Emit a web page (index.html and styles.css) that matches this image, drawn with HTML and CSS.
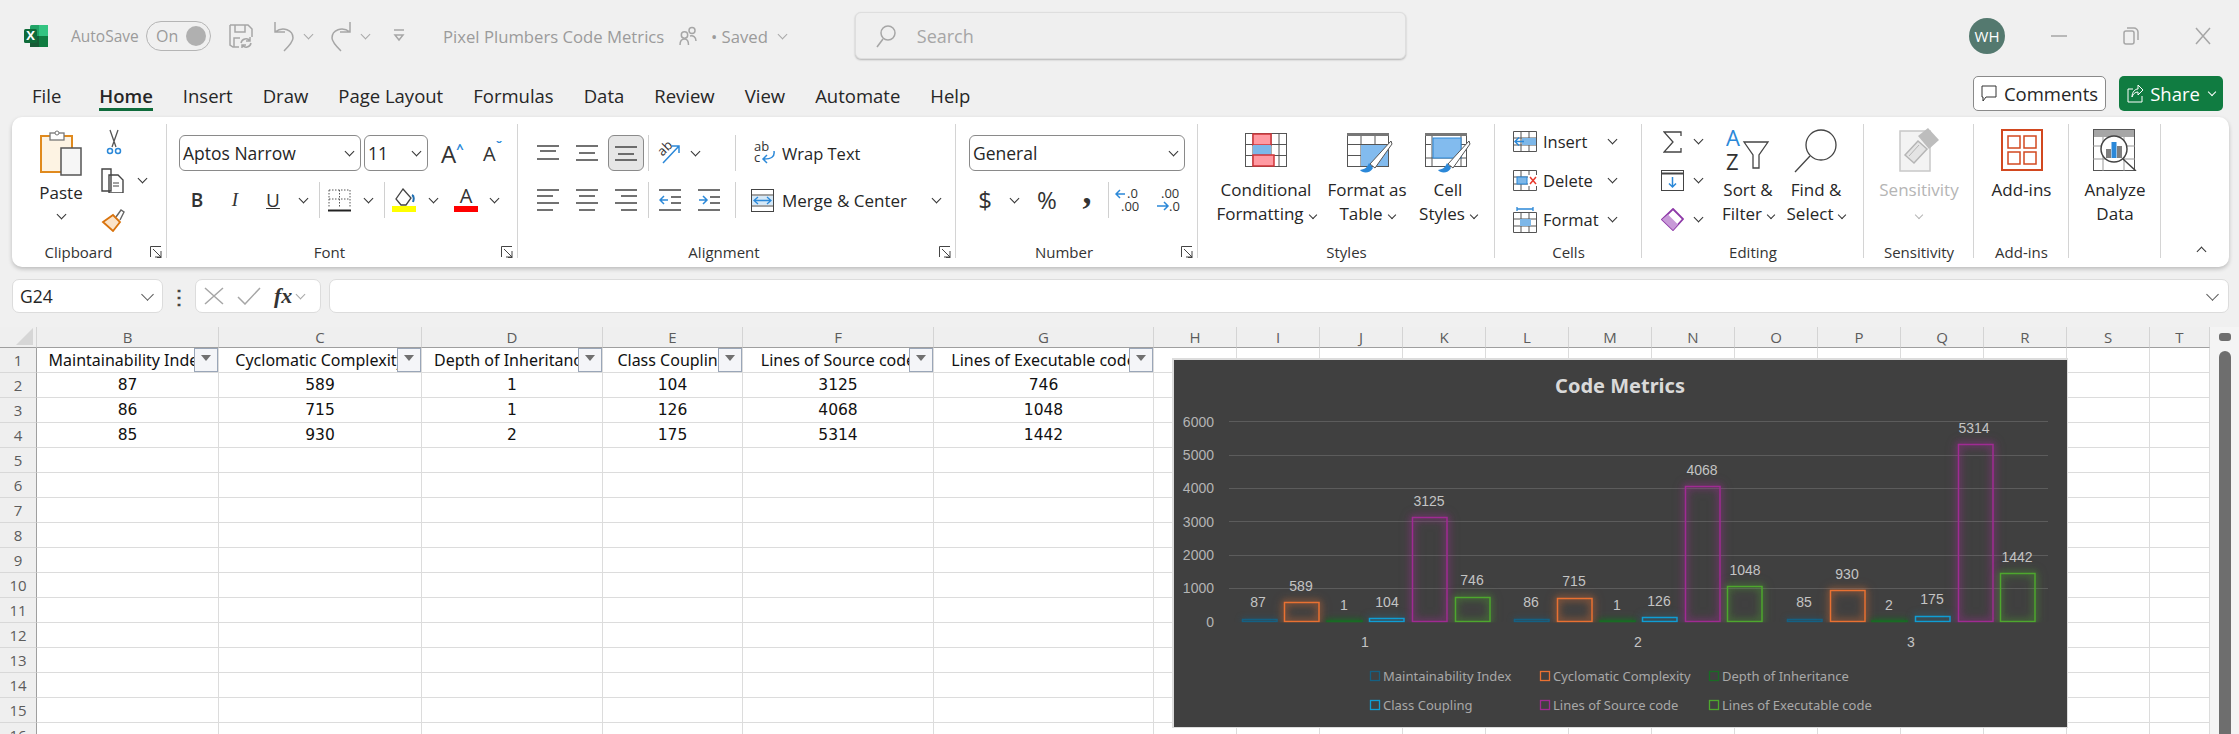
FILE: index.html
```html
<!DOCTYPE html>
<html lang="en">
<head>
    <meta charset="UTF-8">
    <title>Pixel Plumbers Code Metrics</title>
    <link rel="stylesheet" href="styles.css">
</head>
<body>
<header class="titlebar">
    <div class="title-left">
        <svg class="logo" width="24" height="24" viewBox="0 0 24 24"><rect x="6" y="1" width="18" height="22" rx="1.5" fill="#21a366"/><rect x="15" y="1" width="9" height="11" fill="#33c481"/><rect x="15" y="12" width="9" height="11" fill="#107c41"/><rect x="6" y="12" width="9" height="11" fill="#185c37"/><rect x="0" y="5" width="13" height="14" rx="1.5" fill="#0f6b3a"/><text x="6.5" y="16" class="logo-x">X</text></svg>
        <span class="autosave">AutoSave</span>
        <span class="toggle"><span>On</span><i></i></span>
        <svg class="t-save dim" width="24" height="24" viewBox="0 0 24 24"><path d="M1 1h18l4 4v8M1 1v20l3 2h6M6 1v7h10V1M5 23v-9h6"/><path d="M12 19a5 5 0 0 1 9-2M22 19a5 5 0 0 1-9 2M21 13v4h-4M13 25v-4h4"/></svg>
        <svg class="t-undo dim" width="22" height="32" viewBox="0 0 22 32"><path d="M2 2v10h10M2 12c8-6 18-2 18 6 0 4-4 8-9 13"/></svg>
        <span class="chev dim-chev t-c1"></span>
        <svg class="t-redo dim" width="22" height="32" viewBox="0 0 22 32"><path d="M20 2v10H10M20 12c-8-6-18-2-18 6 0 4 4 8 9 13"/></svg>
        <span class="chev dim-chev t-c2"></span>
        <svg class="t-qat dim" width="12" height="14" viewBox="0 0 12 14"><path d="M1 1h10M2 6l4 5 4-5z"/></svg>
        <span class="doc-name">Pixel Plumbers Code Metrics</span>
        <svg class="t-person dim" width="18" height="20" viewBox="0 0 18 20"><circle cx="5.500" cy="9" r="3.200"/><path d="M1 19c0-4 2-6 4.500-6s4 2 4 6"/><circle cx="13" cy="4.500" r="3"/><path d="M11 10c3-1 6 1 6 5"/></svg>
        <span class="saved">• Saved</span>
        <span class="chev dim-chev t-c3"></span>
    </div>
    <div class="search">
        <svg class="dim" width="20" height="24" viewBox="0 0 20 24"><circle cx="12" cy="9" r="7"/><path d="M7 15L1 23"/></svg>
        <span>Search</span>
    </div>
    <div class="title-right">
        <span class="avatar">WH</span>
        <span class="win"><svg class="dim" width="16" height="2" viewBox="0 0 16 2"><path d="M0 1h16"/></svg></span>
        <span class="win"><svg class="dim" width="16" height="18" viewBox="0 0 16 18"><rect x="1" y="4" width="10" height="13" rx="2"/><path d="M4 1h7c2 0 4 2 4 4v8"/></svg></span>
        <span class="win"><svg class="dim" width="16" height="18" viewBox="0 0 16 18"><path d="M1 1l14 16M15 1L1 17"/></svg></span>
    </div>
</header>

<nav class="tabs">
    <a>File</a>
    <a class="on">Home</a>
    <a>Insert</a>
    <a>Draw</a>
    <a>Page Layout</a>
    <a>Formulas</a>
    <a>Data</a>
    <a>Review</a>
    <a>View</a>
    <a>Automate</a>
    <a>Help</a>
    <div class="tab-btns">
        <button class="btn-comments"><svg width="16" height="18" viewBox="0 0 16 18"><path d="M1 1h14v11H5l-3 4v-4H1z"/></svg>Comments</button>
        <button class="btn-share"><svg width="17" height="19" viewBox="0 0 17 19"><path d="M6 5H1v13h14v-6M5 13c0-5 3-8 6-8V1l5 5-5 5V8c-3 0-5 2-6 5z"/></svg>Share<span class="chev"></span></button>
    </div>
</nav>

<section class="ribbon">
    <div class="group g-clip">
        <div class="clip-body">
            <div class="paste">
                <svg width="42" height="46" viewBox="0 0 42 46"><rect x="1" y="6" width="31" height="36" fill="#fdf3e3" stroke="#e08a1e" stroke-width="2"/><rect x="10" y="3" width="14" height="7" fill="#fff" stroke="#777" stroke-width="1.300"/><circle cx="17" cy="3" r="2" fill="#fff" stroke="#777"/><rect x="21" y="18" width="20" height="27" fill="#f6f6f6" stroke="#555" stroke-width="1.500"/></svg>
                <span>Paste</span>
                <span class="chev"></span>
            </div>
            <div class="stack clip-tools">
                <div><svg width="16" height="26" viewBox="0 0 16 26"><path d="M4 1l6 17M12 1L6 18" fill="none" stroke="#555" stroke-width="1.300"/><circle cx="4" cy="22" r="2.500" fill="none" stroke="#2b88d8" stroke-width="1.500"/><circle cx="12" cy="22" r="2.500" fill="none" stroke="#2b88d8" stroke-width="1.500"/></svg></div>
                <div><svg width="25" height="25" viewBox="0 0 25 25"><path d="M1 1h9v22H1zM8 7h9l5 5v13H8z" fill="#fff" stroke="#444" stroke-width="1.400"/><path d="M12 15h6M12 18h6" stroke="#444"/></svg><span class="chev"></span></div>
                <div><svg width="25" height="24" viewBox="0 0 25 24"><path d="M15 9l5-7 3 2-4 8" fill="#fff" stroke="#666" stroke-width="1.400"/><path d="M2 14l10-7 7 7-7 9z" fill="#fbe3c8" stroke="#d9730d" stroke-width="1.800"/></svg></div>
            </div>
        </div>
        <div class="group-label">Clipboard</div>
        <svg class="launcher" width="12" height="12" viewBox="0 0 12 12"><path d="M0.500 11V.500H11M3 3l8 8M11 5v6H5M7 11.500h4.500"/></svg>
    </div>

    <div class="group g-font">
        <div class="rows">
            <div class="font-top">
                <div class="select sel-font">Aptos Narrow<span class="chev"></span></div>
                <div class="select sel-size">11<span class="chev"></span></div>
                <span class="big-a">A<sup class="blue">^</sup></span>
                <span class="small-a">A<sup class="blue">ˇ</sup></span>
            </div>
            <div class="row-tools font-tools">
                <b class="glyph">B</b>
                <i class="glyph serif">I</i>
                <u class="glyph">U</u>
                <span class="chev"></span>
                <span class="sep"></span>
                <svg width="23" height="23" viewBox="0 0 23 23"><path d="M1 1h21M1 1v18M22 1v18M11.500 1v18M1 10h21" fill="none" stroke="#555" stroke-dasharray="1.500 1.500"/><path d="M0 21.500h23" stroke="#222" stroke-width="2"/></svg>
                <span class="chev"></span>
                <span class="sep"></span>
                <svg width="24" height="24" viewBox="0 0 24 24"><path d="M11 1l8 9-5 7H9L4 11z" fill="#fff" stroke="#444" stroke-width="1.300"/><path d="M20 7c2 1 2 4 1 7" fill="none" stroke="#1f6fb2" stroke-width="2"/><rect y="18" width="24" height="6" fill="#ffff00"/></svg>
                <span class="chev"></span>
                <svg width="24" height="24" viewBox="0 0 24 24"><text x="12" y="15" class="ink-a">A</text><rect y="18" width="24" height="6" fill="#ff0000"/></svg>
                <span class="chev"></span>
            </div>
        </div>
        <div class="group-label">Font</div>
        <svg class="launcher" width="12" height="12" viewBox="0 0 12 12"><path d="M0.500 11V.500H11M3 3l8 8M11 5v6H5M7 11.500h4.500"/></svg>
    </div>

    <div class="group g-align">
        <div class="rows">
            <div class="row-tools align-top">
                <svg class="lines" width="22" height="16" viewBox="0 0 22 16"><path d="M0 1h22M3 6h16M0 14h22"/></svg>
                <svg class="lines" width="22" height="16" viewBox="0 0 22 16"><path d="M0 1h22M3 8h16M0 15h22"/></svg>
                <span class="pressed"><svg class="lines" width="22" height="16" viewBox="0 0 22 16"><path d="M0 2h22M3 9h16M0 15h22"/></svg></span>
                <span class="sep"></span>
                <svg width="23" height="24" viewBox="0 0 23 24"><text x="2" y="13" class="ab" transform="rotate(-45 7 10)">ab</text><path d="M6 22L22 5M15 5h7v7" fill="none" stroke="#2b88d8" stroke-width="1.500"/></svg>
                <span class="chev"></span>
                <span class="sep sep-end"></span>
                <div class="icon-label wrap-text">
                    <svg width="22" height="24" viewBox="0 0 22 24"><text x="0" y="10" class="tiny">ab</text><text x="0" y="21" class="tiny">c</text><path d="M20 10c1 6-3 8-10 8M13 14l-4 4 4 4" fill="none" stroke="#2b88d8" stroke-width="1.500"/></svg>
                    <span>Wrap Text</span>
                </div>
            </div>
            <div class="row-tools align-bottom">
                <svg class="lines" width="22" height="22" viewBox="0 0 22 22"><path d="M0 1h22M0 7h16M0 14h22M0 21h16"/></svg>
                <svg class="lines" width="22" height="22" viewBox="0 0 22 22"><path d="M0 1h22M3 7h16M0 14h22M3 21h16"/></svg>
                <svg class="lines" width="22" height="22" viewBox="0 0 22 22"><path d="M0 1h22M6 7h16M0 14h22M6 21h16"/></svg>
                <span class="sep"></span>
                <svg width="22" height="22" viewBox="0 0 22 22"><path class="ln" d="M0 1h22M12 8h10M12 14h10M0 21h22"/><path class="bl" d="M9 11H1M5 7l-4 4 4 4"/></svg>
                <svg width="22" height="22" viewBox="0 0 22 22"><path class="ln" d="M0 1h22M12 8h10M12 14h10M0 21h22"/><path class="bl" d="M1 11h8M5 7l4 4-4 4"/></svg>
                <span class="sep sep-end"></span>
                <div class="icon-label merge">
                    <svg width="23" height="23" viewBox="0 0 23 23"><rect x=".5" y=".5" width="22" height="22" fill="#fff" stroke="#444"/><path d="M0 6h23M0 17h23" stroke="#444"/><rect x="1" y="7" width="21" height="9" fill="#d5e8f7"/><path d="M3 11.500h17M7 8l-4 3.500L7 15M16 8l4 3.500L16 15" fill="none" stroke="#2b88d8" stroke-width="1.300"/></svg>
                    <span>Merge &amp; Center</span>
                    <span class="chev"></span>
                </div>
            </div>
        </div>
        <div class="group-label">Alignment</div>
        <svg class="launcher" width="12" height="12" viewBox="0 0 12 12"><path d="M0.500 11V.500H11M3 3l8 8M11 5v6H5M7 11.500h4.500"/></svg>
    </div>

    <div class="group g-num">
        <div class="rows">
            <div class="num-top"><div class="select sel-num">General<span class="chev"></span></div></div>
            <div class="row-tools num-tools">
                <span class="glyph lg">$</span>
                <span class="chev"></span>
                <span class="glyph lg">%</span>
                <span class="glyph lg heavy">,</span>
                <span class="sep"></span>
                <svg width="24" height="26" viewBox="0 0 24 26"><text x="12" y="11" class="tiny">.0</text><text x="6" y="24" class="tiny">.00</text><path class="bl" d="M10 7H1M5 3L1 7l4 4"/></svg>
                <svg width="24" height="26" viewBox="0 0 24 26"><text x="5" y="11" class="tiny">.00</text><text x="13" y="24" class="tiny">.0</text><path class="bl" d="M1 19h11M8 15l4 4-4 4"/></svg>
            </div>
        </div>
        <div class="group-label">Number</div>
        <svg class="launcher" width="12" height="12" viewBox="0 0 12 12"><path d="M0.500 11V.500H11M3 3l8 8M11 5v6H5M7 11.500h4.500"/></svg>
    </div>

    <div class="group g-styles">
        <div class="bigs">
            <div class="big big-cond">
                <div class="big-icon"><svg width="42" height="34" viewBox="0 0 42 34"><rect x=".5" y=".5" width="41" height="33" fill="#fff" stroke="#555"/><path d="M0 11.500h42M0 22.500h42M8 0v34M26 0v34M34 0v34" stroke="#555"/><rect x="8" y="1" width="18" height="11" fill="#ff9aa2" stroke="#d13438" stroke-width="1.500"/><rect x="8" y="12" width="18" height="10" fill="#7db7e8"/><rect x="8" y="22" width="21" height="11" fill="#ff9aa2" stroke="#d13438" stroke-width="1.500"/></svg></div>
                <span>Conditional</span>
                <span>Formatting<i class="chev"></i></span>
            </div>
            <div class="big big-table">
                <div class="big-icon"><svg width="46" height="42" viewBox="0 0 46 42"><rect x=".5" y=".5" width="41" height="33" fill="#fff" stroke="#555"/><path d="M0 11.500h42M14 0v34M28 0v34M0 22.500h42" stroke="#555"/><path d="M0 0h42v3H0z" fill="#777"/><rect x="14" y="12" width="27" height="21" fill="#82bbee"/><path d="M44 8L23 31l5 4L45 11z" fill="#fff" stroke="#555"/><path d="M22 30c-2 4-3 6-9 7 2 3 10 4 13-2z" fill="#2b88d8"/></svg></div>
                <span>Format as</span>
                <span>Table<i class="chev"></i></span>
            </div>
            <div class="big big-cell">
                <div class="big-icon"><svg width="46" height="42" viewBox="0 0 46 42"><rect x=".5" y=".5" width="41" height="33" fill="#fff" stroke="#555"/><path d="M0 11.500h6M36 11.500h6M7 0v34M36 0v34M0 25h42" stroke="#555"/><path d="M0 0h42v3H0z" fill="#777"/><rect x="8" y="5" width="28" height="20" fill="#82bbee" stroke="#2b88d8"/><path d="M44 8L23 31l5 4L45 11z" fill="#fff" stroke="#555"/><path d="M22 30c-2 4-3 6-9 7 2 3 10 4 13-2z" fill="#2b88d8"/></svg></div>
                <span>Cell</span>
                <span>Styles<i class="chev"></i></span>
            </div>
        </div>
        <div class="group-label">Styles</div>
    </div>

    <div class="group g-cells">
        <div class="stack cell-rows">
            <div><svg width="24" height="21" viewBox="0 0 24 21"><path d="M.5.500h23v20H.5zM0 7h24M0 14h24M8 0v21M16 0v21" fill="#fff" stroke="#555"/><rect x="9" y="7" width="14" height="7" fill="#7db7e8"/><path d="M11 10.500H2M6 6.500l-4 4 4 4" fill="none" stroke="#2b88d8" stroke-width="1.500"/></svg><span>Insert</span><span class="chev"></span></div>
            <div><svg width="24" height="21" viewBox="0 0 24 21"><path d="M.5.500h23v20H.5zM0 7h24M0 14h24M8 0v21M16 0v21" fill="#fff" stroke="#555"/><rect x="4" y="7" width="10" height="7" fill="#7db7e8" stroke="#2b88d8"/><rect x="15" y="5" width="9" height="11" fill="#fff"/><path d="M17 7l6 7M23 7l-6 7" stroke="#e8372a" stroke-width="1.500"/></svg><span>Delete</span><span class="chev"></span></div>
            <div><svg width="24" height="26" viewBox="0 0 24 26"><path d="M.5 5.500h23v20H.5zM0 12h24M0 19h24M8 5v21M16 5v21" fill="#fff" stroke="#555"/><rect x="7" y="12" width="11" height="7" fill="#7db7e8"/><path d="M4 2h16M4 0v4M20 0v4" fill="none" stroke="#2b88d8" stroke-width="1.300"/></svg><span>Format</span><span class="chev"></span></div>
        </div>
        <div class="group-label">Cells</div>
    </div>

    <div class="group g-edit">
        <div class="edit-body">
            <div class="stack edit-rows">
                <div><svg width="19" height="22" viewBox="0 0 19 22"><path d="M18 5V1H1l9 10-9 10h17v-4" fill="none" stroke="#444" stroke-width="1.300"/></svg><span class="chev"></span></div>
                <div><svg width="23" height="21" viewBox="0 0 23 21"><rect x=".5" y=".5" width="22" height="20" fill="#fff" stroke="#444"/><path d="M0 3.500h23" stroke="#444" stroke-width="2"/><path d="M11.500 7v10M8 13.500l3.500 3.500 3.500-3.500" fill="none" stroke="#2b88d8" stroke-width="1.500"/></svg><span class="chev"></span></div>
                <div><svg width="23" height="23" viewBox="0 0 23 23"><path d="M12 1l10 10-10 11L1 11.500z" fill="#fff" stroke="#8e3aa8" stroke-width="1.800"/><path d="M1 11.500l6-5 10 10-5 5.500z" fill="#c89ad8"/></svg><span class="chev"></span></div>
            </div>
            <div class="big big-sort">
                <div class="big-icon"><svg width="44" height="42" viewBox="0 0 44 42"><text x="0" y="17" class="az blue-fill">A</text><text x="0" y="41" class="az">Z</text><path d="M18 13h24l-9 13v13h-6V26z" fill="#fff" stroke="#444" stroke-width="1.300"/></svg></div>
                <span>Sort &amp;</span>
                <span>Filter<i class="chev"></i></span>
            </div>
            <div class="big big-find">
                <div class="big-icon"><svg width="44" height="44" viewBox="0 0 44 44"><circle cx="27" cy="16" r="15" fill="#fff" stroke="#444" stroke-width="1.300"/><path d="M16 27L1 43" stroke="#444" stroke-width="1.300"/></svg></div>
                <span>Find &amp;</span>
                <span>Select<i class="chev"></i></span>
            </div>
        </div>
        <div class="group-label">Editing</div>
    </div>

    <div class="group g-sens">
        <div class="bigs">
            <div class="big big-dim">
                <div class="big-icon"><svg width="40" height="46" viewBox="0 0 40 46"><rect x="1" y="5" width="30" height="40" fill="#f3f3f3" stroke="#c8c8c8" stroke-width="1.500"/><path d="M6 29l13-14 9 8-13 14z" fill="#e4e4e4" stroke="#b5b5b5" stroke-width="1.500"/><path d="M10 30l10-11" stroke="#b5b5b5"/><path d="M19 10l10-8 11 12-10 9z" fill="#bdbdbd"/></svg></div>
                <span>Sensitivity</span>
                <span><i class="chev"></i></span>
            </div>
        </div>
        <div class="group-label">Sensitivity</div>
    </div>

    <div class="group g-addin">
        <div class="bigs">
            <div class="big">
                <div class="big-icon"><svg width="42" height="42" viewBox="0 0 42 42"><rect x="1" y="1" width="40" height="40" fill="none" stroke="#d2481f" stroke-width="2"/><rect x="7" y="7" width="12" height="12" fill="#fff" stroke="#d2481f" stroke-width="1.500"/><rect x="23" y="7" width="12" height="12" fill="#fff" stroke="#d2481f" stroke-width="1.500"/><rect x="7" y="23" width="12" height="12" fill="#fff" stroke="#d2481f" stroke-width="1.500"/><rect x="23" y="23" width="12" height="12" fill="#fff" stroke="#d2481f" stroke-width="1.500"/></svg></div>
                <span>Add-ins</span>
            </div>
        </div>
        <div class="group-label">Add-ins</div>
    </div>

    <div class="group g-analyze">
        <div class="bigs">
            <div class="big">
                <div class="big-icon"><svg width="44" height="42" viewBox="0 0 44 42"><rect x=".5" y=".5" width="41" height="41" fill="#fff" stroke="#555"/><rect x="1" y="1" width="40" height="7" fill="#a6a6a6"/><path d="M0 17h42M0 30h42M10 8v34M31 8v34" stroke="#999"/><circle cx="21" cy="20" r="13" fill="#fff" stroke="#444" stroke-width="1.500"/><rect x="13" y="20" width="5" height="9" fill="#7f7f7f"/><rect x="18.500" y="13" width="5" height="16" fill="#2b88d8"/><rect x="24" y="17" width="5" height="12" fill="#7f7f7f"/><path d="M30 30l13 12" stroke="#444" stroke-width="1.500"/></svg></div>
                <span>Analyze</span>
                <span>Data</span>
            </div>
        </div>
    </div>

    <div class="ribbon-end"><span class="chev chev-up"></span></div>
</section>

<section class="formula">
    <div class="namebox">G24<span class="chev"></span></div>
    <span class="dots">⋮</span>
    <div class="fxbox">
        <svg class="dim" width="20" height="18" viewBox="0 0 20 18"><path d="M1 1l18 16M19 1L1 17"/></svg>
        <svg class="dim" width="24" height="18" viewBox="0 0 24 18"><path d="M1 10l7 7L23 1"/></svg>
        <em>fx</em>
        <span class="chev dim-chev"></span>
    </div>
    <div class="formula-input"><span class="chev"></span></div>
</section>

<main class="sheet">
    <div class="grid-wrap">
        <table class="grid">
            <colgroup>
                <col class="w-head"><col class="w-b"><col class="w-c"><col class="w-d"><col class="w-e"><col class="w-f"><col class="w-g">
                <col class="w-n"><col class="w-n"><col class="w-n"><col class="w-n"><col class="w-n"><col class="w-n"><col class="w-n"><col class="w-n"><col class="w-n"><col class="w-n"><col class="w-n"><col class="w-n">
                <col class="w-t">
            </colgroup>
            <tr class="cols">
                <th class="corner"><i></i></th><th>B</th><th>C</th><th>D</th><th>E</th><th>F</th><th>G</th><th>H</th><th>I</th><th>J</th><th>K</th><th>L</th><th>M</th><th>N</th><th>O</th><th>P</th><th>Q</th><th>R</th><th>S</th><th>T</th>
            </tr>
            <tr>
                <th>1</th>
                <td class="hd"><div>Maintainability Index</div><span class="filter"></span></td>
                <td class="hd"><div>Cyclomatic Complexity</div><span class="filter"></span></td>
                <td class="hd"><div>Depth of Inheritance</div><span class="filter"></span></td>
                <td class="hd"><div>Class Coupling</div><span class="filter"></span></td>
                <td class="hd"><div>Lines of Source code</div><span class="filter"></span></td>
                <td class="hd"><div>Lines of Executable code</div><span class="filter"></span></td>
                <td></td><td></td><td></td><td></td><td></td><td></td><td></td><td></td><td></td><td></td><td></td><td></td><td></td>
            </tr>
            <tr><th>2</th><td>87</td><td>589</td><td>1</td><td>104</td><td>3125</td><td>746</td><td></td><td></td><td></td><td></td><td></td><td></td><td></td><td></td><td></td><td></td><td></td><td></td><td></td></tr>
            <tr><th>3</th><td>86</td><td>715</td><td>1</td><td>126</td><td>4068</td><td>1048</td><td></td><td></td><td></td><td></td><td></td><td></td><td></td><td></td><td></td><td></td><td></td><td></td><td></td></tr>
            <tr><th>4</th><td>85</td><td>930</td><td>2</td><td>175</td><td>5314</td><td>1442</td><td></td><td></td><td></td><td></td><td></td><td></td><td></td><td></td><td></td><td></td><td></td><td></td><td></td></tr>
            <tr><th>5</th><td></td><td></td><td></td><td></td><td></td><td></td><td></td><td></td><td></td><td></td><td></td><td></td><td></td><td></td><td></td><td></td><td></td><td></td><td></td></tr>
            <tr><th>6</th><td></td><td></td><td></td><td></td><td></td><td></td><td></td><td></td><td></td><td></td><td></td><td></td><td></td><td></td><td></td><td></td><td></td><td></td><td></td></tr>
            <tr><th>7</th><td></td><td></td><td></td><td></td><td></td><td></td><td></td><td></td><td></td><td></td><td></td><td></td><td></td><td></td><td></td><td></td><td></td><td></td><td></td></tr>
            <tr><th>8</th><td></td><td></td><td></td><td></td><td></td><td></td><td></td><td></td><td></td><td></td><td></td><td></td><td></td><td></td><td></td><td></td><td></td><td></td><td></td></tr>
            <tr><th>9</th><td></td><td></td><td></td><td></td><td></td><td></td><td></td><td></td><td></td><td></td><td></td><td></td><td></td><td></td><td></td><td></td><td></td><td></td><td></td></tr>
            <tr><th>10</th><td></td><td></td><td></td><td></td><td></td><td></td><td></td><td></td><td></td><td></td><td></td><td></td><td></td><td></td><td></td><td></td><td></td><td></td><td></td></tr>
            <tr><th>11</th><td></td><td></td><td></td><td></td><td></td><td></td><td></td><td></td><td></td><td></td><td></td><td></td><td></td><td></td><td></td><td></td><td></td><td></td><td></td></tr>
            <tr><th>12</th><td></td><td></td><td></td><td></td><td></td><td></td><td></td><td></td><td></td><td></td><td></td><td></td><td></td><td></td><td></td><td></td><td></td><td></td><td></td></tr>
            <tr><th>13</th><td></td><td></td><td></td><td></td><td></td><td></td><td></td><td></td><td></td><td></td><td></td><td></td><td></td><td></td><td></td><td></td><td></td><td></td><td></td></tr>
            <tr><th>14</th><td></td><td></td><td></td><td></td><td></td><td></td><td></td><td></td><td></td><td></td><td></td><td></td><td></td><td></td><td></td><td></td><td></td><td></td><td></td></tr>
            <tr><th>15</th><td></td><td></td><td></td><td></td><td></td><td></td><td></td><td></td><td></td><td></td><td></td><td></td><td></td><td></td><td></td><td></td><td></td><td></td><td></td></tr>
            <tr><th>16</th><td></td><td></td><td></td><td></td><td></td><td></td><td></td><td></td><td></td><td></td><td></td><td></td><td></td><td></td><td></td><td></td><td></td><td></td><td></td></tr>
        </table>

        <!-- chart floats over the cells; viewBox uses window pixels -->
        <figure class="chart">
            <svg width="894" height="368" viewBox="1173 359 894 368">
                <defs><clipPath id="plot"><rect x="1173" y="359" width="894" height="263.500"/></clipPath></defs>
                <text class="c-title" x="1620" y="393">Code Metrics</text>
                <g class="gridlines">
                    <path d="M1229 421.500h819M1229 455.500h819M1229 488.500h819M1229 521.500h819M1229 555.500h819M1229 588.500h819"/>
                </g>
                <g class="axis">
                    <text x="1214" y="427">6000</text>
                    <text x="1214" y="460">5000</text>
                    <text x="1214" y="493">4000</text>
                    <text x="1214" y="527">3000</text>
                    <text x="1214" y="560">2000</text>
                    <text x="1214" y="593">1000</text>
                    <text x="1214" y="627">0</text>
                </g>
                <g clip-path="url(#plot)">
                    <g class="series s-blue">
                        <rect x="1242.500" y="619.500" width="34.500" height="2"/>
                        <rect x="1514.500" y="619.500" width="34.500" height="2"/>
                        <rect x="1787.500" y="619.500" width="34.500" height="2"/>
                    </g>
                    <g class="series s-orange">
                        <rect x="1284.500" y="602.500" width="34.500" height="19"/>
                        <rect x="1557.500" y="598.500" width="34.500" height="23"/>
                        <rect x="1830.500" y="590.500" width="34.500" height="31"/>
                    </g>
                    <g class="series s-green">
                        <rect x="1327" y="621" width="35" height=".5"/>
                        <rect x="1600" y="621" width="35" height=".5"/>
                        <rect x="1872" y="621" width="35" height=".5"/>
                    </g>
                    <g class="series s-sky">
                        <rect x="1369.500" y="618.500" width="34.500" height="3"/>
                        <rect x="1642.500" y="617.500" width="34.500" height="4"/>
                        <rect x="1915.500" y="616.500" width="34.500" height="5"/>
                    </g>
                    <g class="series s-purple">
                        <rect x="1412.500" y="517.500" width="34.500" height="104"/>
                        <rect x="1685.500" y="486.500" width="34.500" height="135"/>
                        <rect x="1958.500" y="444.500" width="34.500" height="177"/>
                    </g>
                    <g class="series s-lime">
                        <rect x="1455.500" y="597.500" width="34.500" height="24"/>
                        <rect x="1727.500" y="586.500" width="34.500" height="35"/>
                        <rect x="2000.500" y="573.500" width="34.500" height="48"/>
                    </g>
                </g>
                <g class="labels">
                    <text x="1258" y="607">87</text><text x="1301" y="591">589</text><text x="1344" y="610">1</text><text x="1387" y="607">104</text><text x="1429" y="506">3125</text><text x="1472" y="585">746</text>
                    <text x="1531" y="607">86</text><text x="1574" y="586">715</text><text x="1617" y="610">1</text><text x="1659" y="606">126</text><text x="1702" y="475">4068</text><text x="1745" y="575">1048</text>
                    <text x="1804" y="607">85</text><text x="1847" y="579">930</text><text x="1889" y="610">2</text><text x="1932" y="604">175</text><text x="1974" y="433">5314</text><text x="2017" y="562">1442</text>
                </g>
                <g class="labels">
                    <text x="1365" y="647">1</text><text x="1638" y="647">2</text><text x="1911" y="647">3</text>
                </g>
                <g class="legend">
                    <rect class="k-blue" x="1370.500" y="671.500" width="9" height="9"/><text x="1383" y="681">Maintainability Index</text>
                    <rect class="k-orange" x="1540.500" y="671.500" width="9" height="9"/><text x="1553" y="681">Cyclomatic Complexity</text>
                    <rect class="k-green" x="1709.500" y="671.500" width="9" height="9"/><text x="1722" y="681">Depth of Inheritance</text>
                    <rect class="k-sky" x="1370.500" y="700.500" width="9" height="9"/><text x="1383" y="710">Class Coupling</text>
                    <rect class="k-purple" x="1540.500" y="700.500" width="9" height="9"/><text x="1553" y="710">Lines of Source code</text>
                    <rect class="k-lime" x="1709.500" y="700.500" width="9" height="9"/><text x="1722" y="710">Lines of Executable code</text>
                </g>
            </svg>
        </figure>
    </div>
    <aside class="scrollbar">
        <span class="arrow"></span>
        <span class="thumb"></span>
    </aside>
</main>
</body>
</html>
```

FILE: styles.css
```css
*{
    margin: 0;
    padding: 0;
    box-sizing: border-box;
}
body{
    width: 2239px;
    height: 734px;
    overflow: hidden;
    background: #f0f0f0;
    font-family: "Open Sans", "Noto Sans", sans-serif;
    color: #262626;
}

/* shared bits */
.chev{
    display: inline-block;
    width: 7px;
    height: 7px;
    border-right: 1.6px solid #333;
    border-bottom: 1.6px solid #333;
    transform: translateY(-2px) rotate(45deg);
}
.dim-chev{
    border-color: #a8a8a8;
}
.dim{
    fill: none;
    stroke: #a6a6a6;
    stroke-width: 1.5;
}
.blue{
    color: #2b88d8;
}
.sep{
    display: block;
    width: 1px;
    height: 36px;
    background: #d0d0d0;
}

/* title bar */
.titlebar{
    height: 72px;
    display: flex;
    align-items: center;
}
.title-left{
    width: 856px;
    padding-left: 24px;
    display: flex;
    align-items: center;
    color: #9b9b9b;
    font-size: 16px;
    white-space: nowrap;
}
.logo-x{
    font: bold 13px "Open Sans", sans-serif;
    fill: #fff;
    text-anchor: middle;
}
.autosave{
    margin-left: 23px;
    width: 75px;
    font-size: 15.500px;
}
.toggle{
    width: 65px;
    height: 30px;
    border: 1.5px solid #b5b5b5;
    border-radius: 15px;
    display: flex;
    align-items: center;
    justify-content: space-between;
    padding: 0 4px 0 9px;
}
.toggle i{
    width: 20px;
    height: 20px;
    border-radius: 50%;
    background: #b0b0b0;
}
.t-save{ margin-left: 18px; }
.t-undo{ margin-left: 20px; }
.t-c1{ margin-left: 10px; }
.t-redo{ margin-left: 18px; }
.t-c2{ margin-left: 10px; }
.t-qat{ margin-left: 24px; }
.doc-name{
    margin-left: 38px;
    width: 228px;
    font-size: 16.700px;
}
.t-person{ margin-left: 8px; }
.saved{
    margin-left: 14px;
    width: 68px;
    font-size: 16.700px;
}
.search{
    width: 552px;
    height: 47px;
    margin-top: -1px;
    background: #efefef;
    border: 1px solid #dedede;
    border-radius: 6px;
    box-shadow: 0 1px 2px rgba(0,0,0,.25);
    display: flex;
    align-items: center;
    gap: 21px;
    padding-left: 20px;
    color: #a6a6a6;
    font-size: 18px;
}
.title-right{
    margin-left: 563px;
    display: flex;
    align-items: center;
}
.avatar{
    width: 36px;
    height: 36px;
    border-radius: 50%;
    background: #54796f;
    color: #fff;
    font-size: 15px;
    display: flex;
    align-items: center;
    justify-content: center;
}
.win{
    width: 72px;
    display: flex;
    justify-content: center;
}
.avatar + .win{
    margin-left: 18px;
}

/* tabs */
.tabs{
    height: 45px;
    padding-left: 32px;
    display: flex;
    align-items: flex-start;
    gap: 30px;
    font-size: 18.500px;
    position: relative;
}
.tabs a{
    height: 39px;
    line-height: 48px;
    white-space: nowrap;
}
.tabs a.on{
    font-weight: 600;
    margin-left: 8px;
    border-bottom: 3px solid #0e6b3b;
}
.tab-btns{
    margin-left: auto;
    margin-right: 16px;
    padding-top: 4px;
    display: flex;
    gap: 13px;
}
.tab-btns button{
    height: 35px;
    border-radius: 5px;
    font: 18.500px "Open Sans", sans-serif;
    display: flex;
    align-items: center;
    justify-content: center;
}
.btn-comments{
    width: 133px;
    gap: 7px;
    background: #fff;
    color: #262626;
    border: 1px solid #8a8a8a;
}
.btn-comments svg{
    fill: none;
    stroke: #333;
}
.btn-share{
    width: 104px;
    gap: 6px;
    background: #107c41;
    color: #fff;
    border: 0;
}
.btn-share svg{
    fill: none;
    stroke: #fff;
}
.btn-share .chev{
    border-color: #fff;
    width: 6px;
    height: 6px;
    margin-left: 3px;
}

/* ribbon */
.ribbon{
    margin-left: 12px;
    width: 2217px;
    height: 150px;
    background: #fff;
    border-radius: 10px;
    box-shadow: 0 2px 4px rgba(0,0,0,.22);
    display: flex;
    font-size: 17px;
}
.group{
    position: relative;
    height: 150px;
    flex: none;
}
.group::after{
    content: "";
    position: absolute;
    right: 0;
    top: 7px;
    bottom: 9px;
    width: 1px;
    background: #d4d4d4;
}
.g-clip{ width: 155px; }
.g-font{ width: 351px; }
.g-align{ width: 438px; }
.g-num{ width: 242px; }
.g-styles{ width: 297px; }
.g-cells{ width: 147px; }
.g-edit{ width: 222px; }
.g-sens{ width: 110px; }
.g-addin{ width: 95px; }
.g-analyze{ width: 92px; }
.group-label{
    position: absolute;
    left: 0;
    right: 0;
    top: 124px;
    text-align: center;
    font-size: 15px;
    line-height: 22px;
    color: #333;
}
.g-clip .group-label{ right: 22px; }
.g-font .group-label,
.g-align .group-label,
.g-num .group-label{ right: 26px; }
.launcher{
    position: absolute;
    right: 5px;
    top: 129px;
    fill: none;
    stroke: #444;
}
.stack{
    padding-top: 5px;
    display: grid;
    grid-auto-rows: 39px;
}
.stack > div{
    display: flex;
    align-items: center;
}

/* clipboard */
.clip-body{
    display: flex;
}
.paste{
    width: 62px;
    margin-left: 18px;
    padding-top: 13px;
    display: flex;
    flex-direction: column;
    align-items: center;
}
.paste span:nth-child(2){
    margin-top: 5px;
    line-height: 24px;
}
.paste .chev{
    margin-top: 8px;
}
.clip-tools{
    margin-left: 9px;
}
.clip-tools .chev{
    margin-left: 13px;
}
.clip-tools div:first-child svg{
    margin-left: 5px;
}

/* two-row groups */
.rows{
    padding-top: 18px;
    display: flex;
    flex-direction: column;
    gap: 11px;
}
.rows > div{
    height: 36px;
}
.select{
    height: 36px;
    border: 1px solid #8a8a8a;
    border-radius: 6px;
    background: #fff;
    display: flex;
    align-items: center;
    justify-content: space-between;
    padding: 0 7px 0 3px;
    font-size: 17.500px;
}
.font-top{
    padding-left: 12px;
    display: flex;
    align-items: center;
    gap: 3px;
}
.sel-font{ width: 182px; }
.sel-size{ width: 64px; }
.big-a{
    margin-left: 10px;
    width: 34px;
    font-size: 24px;
    color: #333;
}
.small-a{
    margin-left: 5px;
    font-size: 20px;
    color: #333;
}
.font-top sup{
    font-size: 13px;
    font-weight: 700;
    vertical-align: 10px;
    line-height: 0;
}
.row-tools{
    display: grid;
    align-items: center;
    justify-items: center;
}
.font-tools{
    margin-left: 11px;
    grid-template-columns: 38px 38px 38px 22px 10px 30px 28px 4px 36px 22px 44px 12px;
}
.glyph{
    font-size: 19px;
    font-weight: 600;
    color: #333;
}
.font-tools i.glyph{
    font-family: "Liberation Serif", serif;
    font-weight: 400;
}
.font-tools u.glyph{
    font-weight: 400;
}
.ink-a{
    font: 20px "Open Sans", sans-serif;
    fill: #333;
    text-anchor: middle;
}
.lines,
.ln{
    fill: none;
    stroke: #444;
    stroke-width: 1.500;
}
.bl{
    fill: none;
    stroke: #2b88d8;
    stroke-width: 1.500;
}
.align-top,
.align-bottom{
    margin-left: 10px;
}
.align-top{
    grid-template-columns: 40px 38px 40px 4px 36px 18px 32px auto;
}
.align-bottom{
    grid-template-columns: 40px 38px 40px 4px 40px 38px 8px auto;
}
.sep-end{
    justify-self: end;
}
.pressed{
    width: 36px;
    height: 36px;
    background: #e6e6e6;
    border: 1px solid #8a8a8a;
    border-radius: 6px;
    display: flex;
    align-items: center;
    justify-content: center;
}
.icon-label{
    justify-self: start;
    display: flex;
    align-items: center;
    white-space: nowrap;
    font-size: 17px;
}
.wrap-text{
    padding-left: 18px;
    gap: 6px;
    font-size: 16.500px;
}
.merge{
    padding-left: 15px;
    gap: 8px;
}
.merge .chev{
    margin-left: 18px;
}
.ab,
.tiny{
    font: 13px "Open Sans", sans-serif;
    fill: #333;
}
.num-top{
    padding-left: 13px;
}
.sel-num{
    width: 216px;
}
.num-tools{
    margin-left: 13px;
    grid-template-columns: 32px 26px 40px 40px 2px 36px 46px;
}
.glyph.lg{
    font-size: 24px;
    font-weight: 400;
    line-height: 36px;
}
.glyph.heavy{
    font: 700 36px "Liberation Serif", serif;
    margin-top: -18px;
}

/* big buttons */
.bigs{
    display: flex;
    justify-content: center;
}
.g-styles .bigs{
    justify-content: flex-start;
    padding-left: 14px;
}
.big{
    padding-top: 12px;
    display: flex;
    flex-direction: column;
    align-items: center;
    line-height: 24px;
    white-space: nowrap;
}
.big-icon{
    height: 49px;
    display: flex;
    align-items: flex-start;
}
.big .chev{
    width: 6px;
    height: 6px;
    margin-left: 6px;
    border-width: 1.400px;
}
.big-cond{ width: 108px; }
.big-table{ width: 94px; }
.big-cell{ width: 68px; }
.big-cond .big-icon,
.big-table .big-icon,
.big-cell .big-icon{
    padding-top: 4px;
}
.big-table .big-icon{
    padding-left: 5px;
}
.big-dim{
    color: #b5b5b5;
}
.big-dim .big-icon{
    margin-top: -3px;
    height: 52px;
}
.big-dim .chev{
    border-color: #b5b5b5;
    margin-left: 0;
}

/* cells */
.cell-rows{
    padding-left: 18px;
}
.cell-rows > div{
    display: grid;
    grid-template-columns: 24px 60px 18px;
    column-gap: 6px;
    font-size: 16.500px;
}

/* editing */
.edit-body{
    display: flex;
}
.edit-rows{
    width: 70px;
    padding-left: 19px;
}
.edit-rows > div{
    display: grid;
    grid-template-columns: 23px 28px;
    justify-items: center;
}
.big-sort{ width: 72px; }
.big-find{ width: 64px; }
.az{
    font: 22px "Open Sans", sans-serif;
    fill: #333;
}
.blue-fill{
    fill: #2b88d8;
}
.ribbon-end{
    flex: 1;
    position: relative;
}
.chev-up{
    position: absolute;
    left: 37px;
    top: 131px;
    transform: rotate(225deg);
}

/* formula bar */
.formula{
    margin-top: 12px;
    padding-left: 12px;
    height: 34px;
    display: flex;
    align-items: center;
}
.formula > div{
    height: 34px;
    background: #fff;
    border: 1px solid #dcdcdc;
    border-radius: 7px;
}
.namebox{
    width: 151px;
    padding: 0 10px 0 7px;
    display: flex;
    align-items: center;
    justify-content: space-between;
    font-size: 17.500px;
}
.namebox .chev{
    width: 9px;
    height: 9px;
    border-color: #555;
}
.dots{
    width: 32px;
    text-align: center;
    font-size: 20px;
    font-weight: 700;
    color: #444;
}
.fxbox{
    width: 126px;
    padding-left: 8px;
    display: flex;
    align-items: center;
    gap: 13px;
    color: #333;
}
.fxbox em{
    font: italic 700 22px "Liberation Serif", serif;
    margin-right: -8px;
}
.formula-input{
    margin-left: 8px;
    width: 1900px;
    display: flex;
    align-items: center;
    justify-content: flex-end;
    padding-right: 11px;
}
.formula-input .chev{
    width: 9px;
    height: 9px;
    border-color: #555;
}

/* sheet */
.sheet{
    margin-top: 14px;
    display: flex;
    height: 407px;
    overflow: hidden;
}
.grid-wrap{
    position: relative;
    width: 2210px;
    background: #fff;
}
.grid{
    table-layout: fixed;
    width: 2210px;
    border-collapse: separate;
    border-spacing: 0;
}
.w-head{ width: 37px; }
.w-b{ width: 182px; }
.w-c{ width: 203px; }
.w-d{ width: 181px; }
.w-e{ width: 140px; }
.w-f{ width: 191px; }
.w-g{ width: 220px; }
.w-n{ width: 83px; }
.w-t{ width: 60px; }
.grid tr{
    height: 25px;
}
.grid tr.cols{
    height: 21px;
}
.grid th{
    background: #efefef;
    font-weight: 400;
    font-size: 15px;
    color: #5c5c5c;
    text-align: center;
    border-right: 1px solid #9f9f9f;
    border-bottom: 1px solid #d8d8d8;
    line-height: 20px;
    padding: 0;
}
.cols th{
    height: 21px;
    border-right: 1px solid #d4d4d4;
    border-bottom: 1px solid #9f9f9f;
}
.corner{
    position: relative;
}
.corner i{
    position: absolute;
    left: 16px;
    top: 1px;
    border-style: solid;
    border-width: 0 0 17px 17px;
    border-color: transparent transparent #d6d6d6 transparent;
}
.grid td{
    height: 25px;
    border-right: 1px solid #dcdcdc;
    border-bottom: 1px solid #dcdcdc;
    text-align: center;
    font: 15.500px "DejaVu Sans", sans-serif;
    color: #111;
    padding: 0;
    overflow: hidden;
    white-space: nowrap;
}
.grid td.hd{
    position: relative;
    font: 16px "Noto Sans", sans-serif;
}
.hd div{
    overflow: hidden;
}
.filter{
    position: absolute;
    right: 0;
    top: 0;
    width: 24px;
    height: 24px;
    background: #f4f5f8;
    border: 1px solid #9aa6b8;
}
.filter::after{
    content: "";
    position: absolute;
    left: 6px;
    top: 6px;
    border-style: solid;
    border-width: 6px 5px 0 5px;
    border-color: #707070 transparent transparent transparent;
}
.chart{
    position: absolute;
    left: 1173px;
    top: 32px;
    width: 894px;
    height: 368px;
    background: #404040;
    border-left: 1px solid #dcdcdc;
    border-top: 1px solid #dcdcdc;
    outline: 1px solid #dcdcdc;
    overflow: hidden;
}
.chart svg{
    display: block;
    margin: -1px 0 0 -1px;
}
.c-title{
    font: 700 20px "Noto Sans", sans-serif;
    fill: #d9d9d9;
    text-anchor: middle;
}
.gridlines path{
    stroke: #5c5c5c;
    stroke-width: 1;
}
.axis text{
    font: 14px "Liberation Sans", sans-serif;
    fill: #b4b4b4;
    text-anchor: end;
}
.labels text{
    font: 14px "Liberation Sans", sans-serif;
    fill: #c4c4c4;
    text-anchor: middle;
}
.legend text{
    font: 13px "Noto Sans", sans-serif;
    fill: #a8a8a8;
}
.legend rect{
    fill: none;
    stroke-width: 1.300;
}
.series rect{
    fill: none;
    stroke-width: 1.500;
}
/* glow is the stroke's own shadow, stacked where it needs to read stronger */
.s-blue{ stroke: #156082; filter: drop-shadow(0 0 3px rgba(21,96,130,.7)); }
.s-orange{ stroke: #e97132; filter: drop-shadow(0 0 3px rgba(233,113,50,.75)) drop-shadow(0 0 4px rgba(233,113,50,.55)); }
.s-green{ stroke: #196b24; filter: drop-shadow(0 0 2px #196b24) drop-shadow(0 0 3px #196b24); }
.s-sky{ stroke: #0f9ed5; filter: drop-shadow(0 0 4px rgba(15,158,213,.55)); }
.s-purple{ stroke: #a02b93; filter: drop-shadow(0 0 3px rgba(160,43,147,.85)) drop-shadow(0 0 4px rgba(160,43,147,.65)); }
.s-lime{ stroke: #4ea72e; filter: drop-shadow(0 0 3px rgba(78,167,46,.75)) drop-shadow(0 0 4px rgba(78,167,46,.55)); }
.k-blue{ stroke: #156082; }
.k-orange{ stroke: #e97132; }
.k-green{ stroke: #196b24; }
.k-sky{ stroke: #0f9ed5; }
.k-purple{ stroke: #a02b93; }
.k-lime{ stroke: #4ea72e; }
.scrollbar{
    flex: 1;
    background: #f4f4f4;
    position: relative;
}
.arrow{
    position: absolute;
    left: 9px;
    top: 6px;
    width: 12px;
    height: 8px;
    border-radius: 3px;
    background: #6e6e6e;
}
.thumb{
    position: absolute;
    left: 9px;
    top: 24px;
    width: 12px;
    height: 400px;
    border-radius: 6px;
    background: #6e6e6e;
}
```
